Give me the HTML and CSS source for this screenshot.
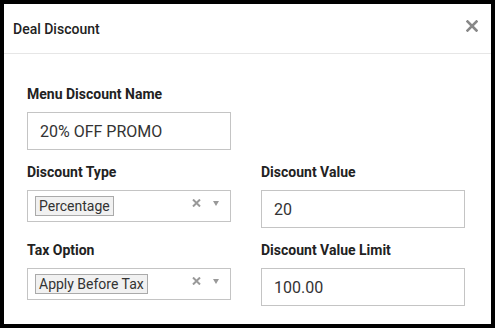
FILE: index.html
```html
<!DOCTYPE html>
<html lang="en">
<head>
    <meta charset="UTF-8">
    <meta name="viewport" content="width=device-width, initial-scale=1.0">
    <title>Deal Discount</title>
    <link rel="stylesheet" href="styles.css">
</head>
<body>
    <!-- Deal Discount modal -->
    <div class="modal">
        <div class="modal-header">
            <h1>Deal Discount</h1>
            <button class="close-button" aria-label="Close">
                <svg width="12" height="12" viewBox="0 0 12 12">
                    <path d="M1.5 1.5 L10.5 10.5 M10.5 1.5 L1.5 10.5" stroke="#888" stroke-width="2.6" stroke-linecap="square"/>
                </svg>
            </button>
        </div>

        <form class="modal-body">
            <div class="row">
                <div class="field">
                    <label for="discount-name">Menu Discount Name</label>
                    <input type="text" id="discount-name" value="20% OFF PROMO">
                </div>
            </div>

            <div class="row">
                <div class="field">
                    <label>Discount Type</label>
                    <div class="select">
                        <span class="tag">Percentage</span>
                        <svg class="clear" width="9" height="8" viewBox="0 0 9 8">
                            <path d="M1 0.5 L8 7.5 M8 0.5 L1 7.5" stroke="#999" stroke-width="2"/>
                        </svg>
                        <span class="arrow"></span>
                    </div>
                </div>
                <div class="field">
                    <label for="discount-value">Discount Value</label>
                    <input type="text" id="discount-value" value="20">
                </div>
            </div>

            <div class="row">
                <div class="field">
                    <label>Tax Option</label>
                    <div class="select">
                        <span class="tag">Apply Before Tax</span>
                        <svg class="clear" width="9" height="8" viewBox="0 0 9 8">
                            <path d="M1 0.5 L8 7.5 M8 0.5 L1 7.5" stroke="#999" stroke-width="2"/>
                        </svg>
                        <span class="arrow"></span>
                    </div>
                </div>
                <div class="field">
                    <label for="discount-limit">Discount Value Limit</label>
                    <input type="text" id="discount-limit" value="100.00">
                </div>
            </div>
        </form>
    </div>
</body>
</html>
```

FILE: styles.css
```css
body {
    margin: 0;
    padding: 0;
    background-color: #000000;
    font-family: Roboto, "Liberation Sans", Arial, sans-serif;
}
.modal {
    margin: 4px;
    width: 487px;
    height: 320px;
    background: #ffffff;
    overflow: hidden;
}
.modal-header {
    display: flex;
    justify-content: space-between;
    align-items: center;
    height: 50px;
    padding: 0 13px 0 9px;
    border-bottom: 1px solid #e6e6e6;
    box-sizing: border-box;
}
.modal-header h1 {
    margin: 0;
    font-size: 14px;
    font-weight: 500;
    color: #222222;
}
.close-button {
    background: none;
    border: none;
    padding: 0;
    margin-top: -6px;
    cursor: pointer;
    display: flex;
}
.modal-body {
    padding: 30px 26px 0 23px;
}
.row {
    display: flex;
    gap: 30px;
    margin-bottom: 12px;
}
.field {
    width: 204px;
}
label {
    display: block;
    font-size: 14px;
    font-weight: bold;
    line-height: 20px;
    margin-bottom: 8px;
    color: #222222;
}
input {
    width: 100%;
    height: 38px;
    box-sizing: border-box;
    padding: 0 12px;
    border: 1px solid #c4c4c4;
    font-family: inherit;
    font-size: 16px;
    color: #333333;
    outline: none;
}
.select {
    display: flex;
    align-items: center;
    height: 32px;
    box-sizing: border-box;
    border: 1px solid #c4c4c4;
    padding: 0 11px 0 7px;
}
.tag {
    font-size: 14px;
    line-height: 18px;
    padding: 0 3px;
    color: #333333;
    background: #f1f1f1;
    border: 1px solid #aaaaaa;
}
.clear {
    margin-left: auto;
    margin-top: -7px;
}
.arrow {
    margin-left: 12px;
    margin-top: -6px;
    width: 0;
    height: 0;
    border-left: 3px solid transparent;
    border-right: 3px solid transparent;
    border-top: 5px solid #999999;
}
```
